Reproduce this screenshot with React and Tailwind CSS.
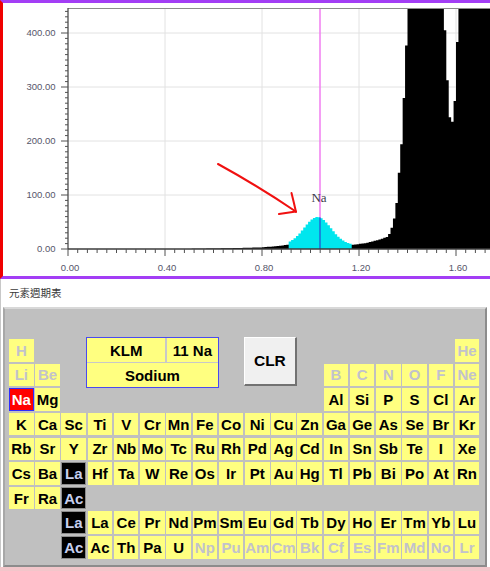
import React from 'react';

// periodic table layout: '' = empty slot, '#' = covered by info box / button
// prefixes: ~ disabled, ! selected, * series marker
const ROWS = [
  ['~H', '', '', '#', '#', '#', '#', '#', '', '#', '#', '', '', '', '', '', '', '~He'],
  ['~Li', '~Be', '', '#', '#', '#', '#', '#', '', '#', '#', '', '~B', '~C', '~N', '~O', '~F', '~Ne'],
  ['!Na', 'Mg', '', '', '', '', '', '', '', '', '', '', 'Al', 'Si', 'P', 'S', 'Cl', 'Ar'],
  ['K', 'Ca', 'Sc', 'Ti', 'V', 'Cr', 'Mn', 'Fe', 'Co', 'Ni', 'Cu', 'Zn', 'Ga', 'Ge', 'As', 'Se', 'Br', 'Kr'],
  ['Rb', 'Sr', 'Y', 'Zr', 'Nb', 'Mo', 'Tc', 'Ru', 'Rh', 'Pd', 'Ag', 'Cd', 'In', 'Sn', 'Sb', 'Te', 'I', 'Xe'],
  ['Cs', 'Ba', '*La', 'Hf', 'Ta', 'W', 'Re', 'Os', 'Ir', 'Pt', 'Au', 'Hg', 'Tl', 'Pb', 'Bi', 'Po', 'At', 'Rn'],
  ['Fr', 'Ra', '*Ac', '', '', '', '', '', '', '', '', '', '', '', '', '', '', ''],
  ['', '', '*La', 'La', 'Ce', 'Pr', 'Nd', 'Pm', 'Sm', 'Eu', 'Gd', 'Tb', 'Dy', 'Ho', 'Er', 'Tm', 'Yb', 'Lu'],
  ['', '', '*Ac', 'Ac', 'Th', 'Pa', 'U', '~Np', '~Pu', '~Am', '~Cm', '~Bk', '~Cf', '~Es', '~Fm', '~Md', '~No', '~Lr'],
];

// spectrum background (page px)
const BG = [
  [186, 249], [230, 248.2], [262, 247.4], [278, 246], [290, 244.5], [320, 244], [352, 245],
  [366, 243], [378, 240], [387, 237], [390, 233], [393, 224], [396, 210], [398, 186], [400, 160],
  [402, 138], [404, 95], [406, 52], [407.5, 18], [409, 5], [444, 5], [445.5, 40], [447, 70],
  [448.5, 100], [450, 118], [451.5, 123], [453, 121], [454.5, 108], [456, 72], [457.5, 35],
  [459, 15], [460, 5], [500, 5],
];

const X0 = 68;
const Y0 = 249;
const PX = 242.5;
const CH = 2.425;

function interp(x) {
  for (let i = 1; i < BG.length; i++) {
    const [x1, y1] = BG[i - 1];
    const [x2, y2] = BG[i];
    if (x <= x2) return y1 + ((y2 - y1) * (x - x1)) / (x2 - x1);
  }
  return BG[BG.length - 1][1];
}

const clampY = (y) => Math.max(8, Math.min(Y0, y));
const peak = (x) => 27 * Math.exp(-((x - 317.5) ** 2) / (2 * 13.3 * 13.3));

function stepPath(k0, k1, fn) {
  let d = `M${(X0 + k0 * CH).toFixed(2)} ${Y0}`;
  for (let k = k0; k <= k1; k++) {
    const xa = X0 + k * CH;
    const y = clampY(fn(xa + CH / 2));
    d += ` V${y.toFixed(2)} H${(xa + CH).toFixed(2)}`;
  }
  return d + ` V${Y0} Z`;
}

function Spectrum() {
  const black = stepPath(49, 176, interp);
  const cyan = stepPath(91, 116, (x) => interp(x) - peak(x));
  const naTop = clampY(interp(320) - peak(320));

  const yTicks = [];
  for (let k = 0; Y0 - k * 5.4 >= 9; k++) yTicks.push(k);
  const xTicks = [];
  for (let k = 0; X0 + k * 9.7 <= 490; k++) xTicks.push(k);

  return (
    <svg width="487" height="273" viewBox="3 3 487 273" className="block">
      <defs>
        <clipPath id="plot">
          <rect x={X0} y={8} width={490 - X0} height={Y0 - 8} />
        </clipPath>
      </defs>

      {[1, 2, 3, 4].map((i) => (
        <line key={'h' + i} x1={X0} x2={490} y1={Y0 - i * 54} y2={Y0 - i * 54} stroke="#e2e2e2" />
      ))}
      {[1, 2, 3, 4].map((i) => (
        <line key={'v' + i} x1={X0 + i * 0.4 * PX} x2={X0 + i * 0.4 * PX} y1={8} y2={Y0} stroke="#e2e2e2" />
      ))}

      <line x1={320} x2={320} y1={8} y2={Y0} stroke="#f07cf0" strokeWidth="1.5" />

      <g clipPath="url(#plot)">
        <path d={black} fill="#000" />
        <path d={cyan} fill="#00e6ee" />
      </g>
      <line x1={320} x2={320} y1={naTop} y2={Y0} stroke="#2848d0" strokeWidth="1.2" />

      {/* frame */}
      <line x1={X0} x2={490} y1={8.5} y2={8.5} stroke="#8c8c8c" />
      <line x1={X0} x2={X0} y1={8} y2={Y0} stroke="#4c4c4c" strokeWidth="1.3" />
      <line x1={X0} x2={490} y1={Y0} y2={Y0} stroke="#3c3c3c" strokeWidth="1.3" />

      {yTicks.map((k) => (
        <line
          key={'yt' + k}
          x1={k % 10 === 0 ? 61 : 65}
          x2={X0}
          y1={Y0 - k * 5.4}
          y2={Y0 - k * 5.4}
          stroke="#505050"
        />
      ))}
      {xTicks.map((k) => (
        <line
          key={'xt' + k}
          x1={X0 + k * 9.7}
          x2={X0 + k * 9.7}
          y1={Y0}
          y2={k % 10 === 0 ? 256 : 253}
          stroke="#505050"
        />
      ))}

      <g fontFamily="'Liberation Sans', Arial, sans-serif" fontSize="9.5" fill="#56566a">
        {['0.00', '100.00', '200.00', '300.00', '400.00'].map((t, i) => (
          <text key={t} x={55.5} y={Y0 - i * 54 + 3.3} textAnchor="end">
            {t}
          </text>
        ))}
        {['0.00', '0.40', '0.80', '1.20', '1.60'].map((t, i) => (
          <text key={t} x={X0 + i * 0.4 * PX + 2} y={271} textAnchor="middle">
            {t}
          </text>
        ))}
      </g>

      <text x={319} y={202} textAnchor="middle" fontFamily="'Liberation Serif', serif" fontSize="13" fill="#3a3a48">
        Na
      </text>

      <g stroke="#f01010" strokeWidth="2" fill="none" strokeLinecap="round">
        <path d="M218 164 Q258 186 295 211" />
        <path d="M291.5 193 Q294 203 296 212" />
        <path d="M279 214 L296 211.5" />
      </g>
    </svg>
  );
}

function Cell({ t }) {
  if (t === '#') return null;
  if (t === '') return <div />;
  const base = 'flex items-center justify-center font-bold text-[15px] leading-none whitespace-nowrap';
  const kind = t[0];
  if (kind === '~') return <div className={`${base} bg-[#ffff80] text-[#c2c2cc]`}>{t.slice(1)}</div>;
  if (kind === '!')
    return <div className={`${base} bg-[#ff0000] text-white border border-[#2c2cff]`}>{t.slice(1)}</div>;
  if (kind === '*')
    return <div className={`${base} bg-black text-[#c6cfee] border border-[#8c8c8c]`}>{t.slice(1)}</div>;
  return <div className={`${base} bg-[#ffff80] text-black`}>{t}</div>;
}

export default function App() {
  return (
    <div className="w-[490px] h-[571px] bg-white overflow-hidden font-['Liberation_Sans',Arial,sans-serif]">
      <div className="h-[279px] border-t-[3px] border-b-[3px] border-l-[3px] border-t-[#a33ef5] border-b-[#a33ef5] border-l-[#f00000]">
        <Spectrum />
      </div>

      <div className="h-[288px] border-l border-[#c8c8c8] flex flex-col">
        <div className="h-[28px] pl-[8px] flex items-center text-[10.5px] text-[#3a3a3a] font-['Noto_Sans_CJK_TC',sans-serif]">
          元素週期表
        </div>
        <div className="ml-[2px] w-[484px] h-[260px] border-2 border-t-[#d8d8d8] border-l-[#a8a8a8] border-r-[#8c8c8c] border-b-[#8c8c8c] bg-[#c0c0c0] pl-[4px] pt-[30px]">
          <div className="grid grid-cols-[repeat(18,24.6px)] grid-rows-[repeat(9,22.5px)] gap-x-[1.64px] gap-y-[2.125px]">
            <div className="col-start-4 col-span-5 row-start-1 row-span-2 -mx-[1.5px] -my-[2px] border border-[#4a4af0] bg-[#c8c8c8] grid grid-cols-[78px_1fr] grid-rows-2 gap-x-[2px] gap-y-[1px] font-bold text-[15px] leading-none">
              <div className="bg-[#ffff80] flex items-center justify-center">KLM</div>
              <div className="bg-[#ffff80] flex items-center justify-center">11 Na</div>
              <div className="col-span-2 bg-[#ffff80] flex items-center justify-center">Sodium</div>
            </div>
            <button className="col-start-10 col-span-2 row-start-1 row-span-2 -mt-[2px] -mx-[1px] bg-[#f0f0f0] border-t border-l border-t-white border-l-white border-r-2 border-b-2 border-r-[#727272] border-b-[#727272] font-bold text-[15.5px] leading-none text-black">
              CLR
            </button>
            {ROWS.map((row, r) => row.map((t, c) => <Cell key={r + '-' + c} t={t} />))}
          </div>
        </div>
      </div>
      <div className="h-[4px] bg-[#f2c6ca]" />
    </div>
  );
}
